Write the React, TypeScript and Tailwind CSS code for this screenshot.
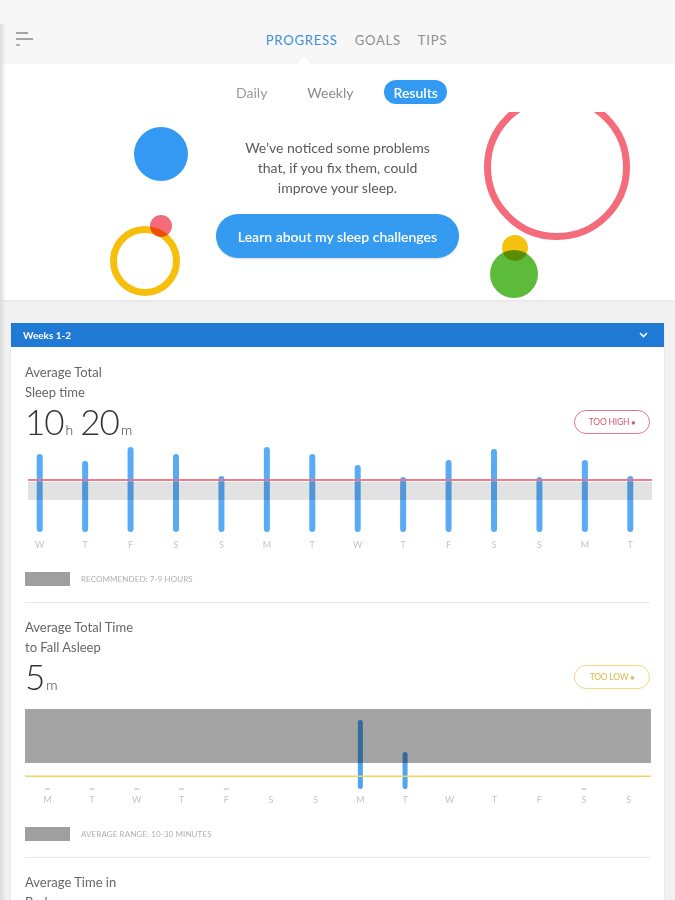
import React from "react";

const days1 = ["W", "T", "F", "S", "S", "M", "T", "W", "T", "F", "S", "S", "M", "T"];
const tops1 = [454, 461, 447, 454, 476, 447, 454, 465, 477, 460, 449, 477, 460, 476];
const days2 = ["M", "T", "W", "T", "F", "S", "S", "M", "T", "W", "T", "F", "S", "S"];
const ticks2 = [0, 1, 2, 3, 4, 12];

function Badge({ label, tone }: { label: string; tone: "red" | "yellow" }) {
  const cls =
    tone === "red"
      ? "border-[#e17a8a] text-[#d65a70]"
      : "border-[#f1d985] text-[#d9b94a]";
  return (
    <div
      className={`flex h-[24px] w-[76px] items-center justify-center rounded-full border ${cls} text-[8.5px] tracking-[-0.2px]`}
    >
      {label} <span className="ml-[2px] text-[7px]">●</span>
    </div>
  );
}

function DayLabels({ days }: { days: string[] }) {
  return (
    <div className="grid h-[14px] grid-cols-[repeat(14,minmax(0,1fr))] text-[9px] leading-[14px] text-[#c4c4c4]">
      {days.map((d, i) => (
        <div key={i} className="text-center">
          {d}
        </div>
      ))}
    </div>
  );
}

function Chart1() {
  const w = 636;
  const col = w / 14;
  return (
    <div className="-ml-[8px] w-[636px]">
      <svg width={w} height={93} className="block">
        {tops1.map((t, i) => {
          const cx = col / 2 + col * i;
          const y = t - 442;
          return <rect key={i} x={cx - 3} y={y} width={6} height={90 - y} rx={3} fill="#5aabf5" />;
        })}
        <rect x={11} y={40} width={624} height={18} fill="#e2e2e2" style={{ mixBlendMode: "multiply" }} />
        <rect x={11} y={37} width={624} height={2} fill="#ef6f7d" opacity={0.9} />
      </svg>
      <div className="mt-[3px]">
        <DayLabels days={days1} />
      </div>
    </div>
  );
}

function Chart2() {
  const w = 626;
  const col = w / 14;
  return (
    <div className="w-[626px]">
      <svg width={w} height={94} className="block">
        {ticks2.map((i) => {
          const cx = col / 2 + col * i;
          return <rect key={i} x={cx - 2.5} y={91} width={5} height={2} fill="#d3dbe4" />;
        })}
        {[
          { i: 7, top: 23 },
          { i: 8, top: 55 },
        ].map((b) => {
          const cx = col / 2 + col * b.i;
          return <rect key={b.i} x={cx - 2.5} y={b.top} width={5} height={92 - b.top} rx={2.5} fill="#4ea6f3" />;
        })}
        <rect x={0} y={12} width={w} height={54} fill="#a4a4a4" style={{ mixBlendMode: "multiply" }} />
        <rect x={0} y={78.5} width={w} height={1.5} fill="#f2d45e" />
      </svg>
      <div className="mt-[2px]">
        <DayLabels days={days2} />
      </div>
    </div>
  );
}

function Legend({ label }: { label: string }) {
  return (
    <div className="flex h-[14px] items-center">
      <div className="h-[14px] w-[45px] bg-[#9f9f9f]" />
      <div className="ml-[11px] text-[8px] tracking-[0.1px] text-[#b0b0b0]">{label}</div>
    </div>
  );
}

export default function App() {
  return (
    <div
      className="relative min-h-[900px] w-[675px] overflow-hidden bg-[#f1f1f1] text-[#555]"
      style={{ fontFamily: "Lato, 'Open Sans', sans-serif" }}
    >
      {/* top bar */}
      <div className="relative flex h-[64px] items-center bg-[#f7f7f7]">
        <div className="absolute left-[16px] top-[32px] flex flex-col gap-[4px]">
          <div className="h-[2px] w-[12px] bg-[#a5a5a5]" />
          <div className="h-[2px] w-[17px] bg-[#a5a5a5]" />
          <div className="h-[2px] w-[4px] bg-[#b0b0b0]" />
        </div>
        <div className="flex w-full justify-center gap-[17px] pl-[38px] pt-[17px] text-[13px] tracking-[0.8px]">
          <span className="text-[#3d8fd8]">PROGRESS</span>
          <span className="text-[#8e8e8e]">GOALS</span>
          <span className="text-[#8e8e8e]">TIPS</span>
        </div>
        <svg className="absolute bottom-0 left-[297px]" width="14" height="7">
          <polygon points="0,7 7,0 14,7" fill="#ffffff" />
        </svg>
      </div>

      {/* hero */}
      <div className="relative h-[236px] bg-white shadow-[0_1px_3px_rgba(0,0,0,0.06)]">
        <div className="absolute left-0 right-0 top-[48px] h-[188px] overflow-hidden">
          <svg width="675" height="188" className="block">
            <circle cx="161" cy="42" r="27" fill="#3399f3" />
            <circle cx="145" cy="149" r="31.5" fill="none" stroke="#f6bf0c" strokeWidth="7" />
            <circle cx="161" cy="114" r="11" fill="#f46b7c" style={{ mixBlendMode: "multiply" }} />
            <circle cx="557" cy="55" r="69.5" fill="none" stroke="#f46b7c" strokeWidth="7" />
            <circle cx="515" cy="136" r="13" fill="#f6c10e" />
            <circle cx="514" cy="162" r="24" fill="#5dbb3c" style={{ mixBlendMode: "multiply" }} />
          </svg>
        </div>
        <div className="relative flex flex-col items-center pt-[16px]">
          <div className="flex h-[24px] items-center pl-[8px] text-[14px]">
            <span className="text-[#9a9a9a]">Daily</span>
            <span className="ml-[40px] text-[#8a8a8a]">Weekly</span>
            <span className="ml-[31px] flex h-[24px] items-center rounded-full bg-[#329af2] px-[9px] font-semibold text-white">
              Results
            </span>
          </div>
          <div className="mt-[34px] text-center text-[14px] leading-[20px] text-[#5a5a5a]">
            We’ve noticed some problems
            <br />
            that, if you fix them, could
            <br />
            improve your sleep.
          </div>
          <button className="mt-[16px] flex h-[44px] w-[243px] items-center justify-center rounded-full bg-[#349bf1] text-[14px] font-semibold text-white shadow-[0_1px_2px_rgba(0,0,0,0.15)]">
            Learn about my sleep challenges
          </button>
        </div>
      </div>

      {/* card */}
      <div className="mx-[11px] mt-[23px] bg-white shadow-[0_1px_2px_rgba(0,0,0,0.08)]">
        <div className="flex h-[24px] items-center justify-between bg-[#1f7ad6] pl-[12px] pr-[16px]">
          <span className="text-[10px] font-bold text-white">Weeks 1-2</span>
          <svg width="9" height="6" viewBox="0 0 9 6">
            <polyline points="1,1 4.5,4.5 8,1" fill="none" stroke="#ffffff" strokeWidth="1.6" />
          </svg>
        </div>

        <div className="px-[14px]">
          {/* section 1 */}
          <div className="border-b border-[#e6e6e6] pb-[16px] pt-[15px]">
            <div className="text-[13px] leading-[20px] text-[#666]">
              Average Total
              <br />
              Sleep time
            </div>
            <div className="flex h-[40px] items-center justify-between">
              <div className="flex items-baseline font-light text-[#333]">
                <span className="text-[35px] leading-none tracking-[-1px]">10</span>
                <span className="ml-[2px] text-[14px]">h</span>
                <span className="ml-[7px] text-[35px] leading-none tracking-[-1px]">20</span>
                <span className="ml-[2px] text-[14px]">m</span>
              </div>
              <Badge label="TOO HIGH" tone="red" />
            </div>
            <Chart1 />
            <div className="mt-[20px]">
              <Legend label="RECOMMENDED: 7-9 HOURS" />
            </div>
          </div>

          {/* section 2 */}
          <div className="border-b border-[#e6e6e6] pb-[16px] pt-[14px]">
            <div className="text-[13px] leading-[20px] text-[#666]">
              Average Total Time
              <br />
              to Fall Asleep
            </div>
            <div className="flex h-[40px] items-center justify-between">
              <div className="flex items-baseline font-light text-[#333]">
                <span className="text-[35px] leading-none">5</span>
                <span className="ml-[1px] text-[14px]">m</span>
              </div>
              <Badge label="TOO LOW" tone="yellow" />
            </div>
            <Chart2 />
            <div className="mt-[20px]">
              <Legend label="AVERAGE RANGE: 10-30 MINUTES" />
            </div>
          </div>

          {/* section 3 */}
          <div className="pb-[20px] pt-[14px]">
            <div className="text-[13px] leading-[20px] text-[#666]">
              Average Time in
              <br />
              Bed
            </div>
          </div>
        </div>
      </div>

      {/* left edge shadow */}
      <div className="pointer-events-none absolute bottom-0 left-0 top-[24px] w-[6px] bg-gradient-to-r from-[#dcdcdc] to-transparent" />
    </div>
  );
}
